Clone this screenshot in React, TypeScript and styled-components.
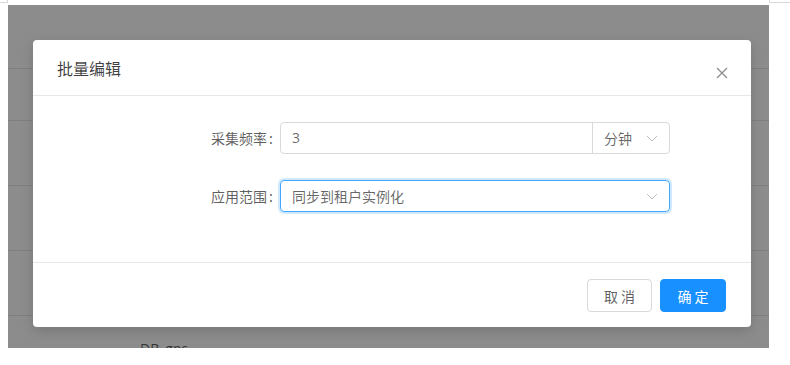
import React from 'react';
import styled, { createGlobalStyle } from 'styled-components';

const GlobalStyle = createGlobalStyle`
	body {
		margin: 0;
		background: #ffffff;
		font-family: 'Open Sans', 'Noto Sans CJK SC', sans-serif;
		font-size: 14px;
		color: rgba(0, 0, 0, 0.65);
	}
`;

const rows = [
	{ height: 64, text: '' },
	{ height: 52, text: '' },
	{ height: 65, text: '' },
	{ height: 65, text: '' },
	{ height: 65, text: '' },
	{ height: 65, text: 'DB_gps' },
];

const Chevron = () => (
	<svg width="12" height="7" viewBox="0 0 12 7">
		<polyline points="1,1 6,6 11,1" fill="none" stroke="#bfbfbf" strokeWidth="1" />
	</svg>
);

const CloseIcon = () => (
	<svg width="12" height="12" viewBox="0 0 12 12">
		<path d="M1 1 L11 11 M11 1 L1 11" stroke="#8c8c8c" strokeWidth="1.3" fill="none" />
	</svg>
);

export const App = () => {
	return (
		<>
			<GlobalStyle />
			<Page>
				<TopStrip>
					<Stub side="left" />
					<Stub side="right" />
				</TopStrip>
				<Backdrop>
					<Table>
						{rows.map((r, i) => (
							<Row key={i} h={r.height}>
								<Cell>{r.text}</Cell>
							</Row>
						))}
					</Table>
					<Mask />
					<Modal>
						<Header>
							<Title>批量编辑</Title>
							<Close>
								<CloseIcon />
							</Close>
						</Header>
						<Body>
							<FormItem>
								<Label>
									采集频率<Colon>:</Colon>
								</Label>
								<Group>
									<InputText>3</InputText>
									<Addon>
										<span>分钟</span>
										<Chevron />
									</Addon>
								</Group>
							</FormItem>
							<FormItem>
								<Label>
									应用范围<Colon>:</Colon>
								</Label>
								<Select>
									<span>同步到租户实例化</span>
									<Chevron />
								</Select>
							</FormItem>
						</Body>
						<Footer>
							<Button>取 消</Button>
							<Button primary>确 定</Button>
						</Footer>
					</Modal>
				</Backdrop>
			</Page>
		</>
	);
};

const Page = styled.div`
	width: 790px;
	height: 365px;
	overflow: hidden;
`;

const TopStrip = styled.div`
	height: 3px;
	margin-bottom: 2px;
	display: flex;
	justify-content: space-between;
`;

const Stub = styled.div<{ side: 'left' | 'right' }>`
	width: ${p => (p.side === 'left' ? '8px' : '21px')};
	height: 3px;
	box-sizing: border-box;
	border-bottom: 1px solid #d9d9d9;
	${p => (p.side === 'left' ? 'border-right: 1px solid #d9d9d9;' : 'border-left: 1px solid #d9d9d9;')}
`;

const Backdrop = styled.div`
	position: relative;
	margin-left: 8px;
	width: 761px;
	height: 343px;
	overflow: hidden;
	background: #ffffff;
`;

const Table = styled.div`
	display: flex;
	flex-direction: column;
`;

const Row = styled.div<{ h: number }>`
	height: ${p => p.h}px;
	box-sizing: border-box;
	flex-shrink: 0;
	border-bottom: 1px solid #e8e8e8;
	display: flex;
	align-items: center;
	padding-left: 132px;
`;

const Cell = styled.div`
	font-size: 14px;
	color: rgba(0, 0, 0, 0.65);
`;

const Mask = styled.div`
	position: absolute;
	inset: 0;
	background: rgba(0, 0, 0, 0.45);
`;

const Modal = styled.div`
	position: absolute;
	left: 25px;
	top: 35px;
	width: 718px;
	height: 287px;
	background: #ffffff;
	border-radius: 4px;
	box-shadow: 0 4px 12px rgba(0, 0, 0, 0.15);
	display: flex;
	flex-direction: column;
`;

const Header = styled.div`
	position: relative;
	height: 56px;
	box-sizing: border-box;
	border-bottom: 1px solid #e8e8e8;
	padding: 0 24px;
	display: flex;
	align-items: center;
`;

const Title = styled.div`
	font-family: 'Noto Sans CJK SC', sans-serif;
	font-size: 16px;
	font-weight: 400;
	line-height: 22px;
	color: rgba(0, 0, 0, 0.75);
`;

const Close = styled.div`
	position: absolute;
	right: 23px;
	top: 27px;
	width: 12px;
	height: 12px;
	display: flex;
`;

const Body = styled.div`
	height: 166px;
	box-sizing: border-box;
	padding: 26px 24px 50px;
	display: flex;
	flex-direction: column;
	gap: 26px;
`;

const FormItem = styled.div`
	display: grid;
	grid-template-columns: 223px 390px;
	align-items: center;
	height: 32px;
`;

const Label = styled.label`
	font-family: 'Noto Sans CJK SC', sans-serif;
	text-align: right;
	font-size: 14px;
	line-height: 32px;
	color: rgba(0, 0, 0, 0.65);
`;

const Colon = styled.span`
	margin: 0 7px 0 2px;
`;

const Group = styled.div`
	display: flex;
	height: 32px;
	box-sizing: border-box;
	border: 1px solid #d9d9d9;
	border-radius: 4px;
`;

const InputText = styled.div`
	flex: 1;
	padding: 0 11px;
	line-height: 30px;
	color: rgba(0, 0, 0, 0.6);
`;

const Addon = styled.div`
	width: 77px;
	box-sizing: border-box;
	border-left: 1px solid #d9d9d9;
	padding: 0 11px 0 11px;
	display: flex;
	align-items: center;
	justify-content: space-between;
	font-family: 'Noto Sans CJK SC', sans-serif;
	color: rgba(0, 0, 0, 0.6);
`;

const Select = styled.div`
	height: 32px;
	box-sizing: border-box;
	border: 1px solid #40a9ff;
	border-radius: 4px;
	box-shadow: 0 0 0 2px rgba(24, 144, 255, 0.2);
	padding: 0 11px;
	display: flex;
	align-items: center;
	justify-content: space-between;
	font-family: 'Noto Sans CJK SC', sans-serif;
	color: rgba(0, 0, 0, 0.6);
`;

const Footer = styled.div`
	height: 65px;
	box-sizing: border-box;
	border-top: 1px solid #e8e8e8;
	padding: 16px 25px 16px 24px;
	display: flex;
	justify-content: flex-end;
	gap: 8px;
`;

const Button = styled.button<{ primary?: boolean }>`
	height: 33px;
	width: ${p => (p.primary ? '66px' : '65px')};
	box-sizing: border-box;
	border-radius: 4px;
	font-family: 'Noto Sans CJK SC', sans-serif;
	font-size: 14px;
	border: 1px solid ${p => (p.primary ? '#1890ff' : '#d9d9d9')};
	background: ${p => (p.primary ? '#1890ff' : '#ffffff')};
	color: ${p => (p.primary ? '#ffffff' : 'rgba(0, 0, 0, 0.65)')};
	padding: 0;
`;

export default App;
